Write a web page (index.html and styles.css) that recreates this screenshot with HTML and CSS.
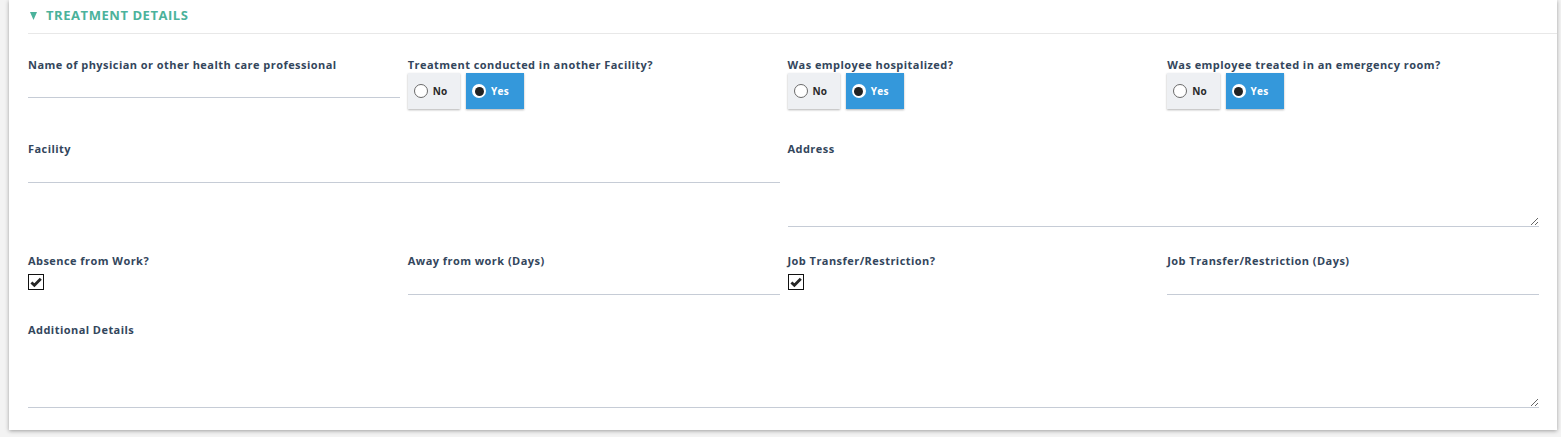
FILE: index.html
```html
<!DOCTYPE html>
<html>
<head>
<meta charset="utf-8">
<link rel="stylesheet" href="styles.css">
</head>
<body>
<div class="card">
  <div class="section-head">
    <svg class="caret" width="7" height="8" viewBox="0 0 7 8"><polygon points="0,0 7,0 3.5,8" fill="#4bb29b"/></svg>
    <span>TREATMENT DETAILS</span>
  </div>

  <div class="row row1">
    <div class="field">
      <label class="lbl">Name of physician or other health care professional</label>
      <input class="inp" type="text">
    </div>
    <div class="field">
      <label class="lbl">Treatment conducted in another Facility?</label>
      <div class="toggle">
        <span class="opt no"><span class="dot"></span>No</span>
        <span class="opt yes"><span class="dot on"></span>Yes</span>
      </div>
    </div>
    <div class="field">
      <label class="lbl">Was employee hospitalized?</label>
      <div class="toggle">
        <span class="opt no"><span class="dot"></span>No</span>
        <span class="opt yes"><span class="dot on"></span>Yes</span>
      </div>
    </div>
    <div class="field">
      <label class="lbl">Was employee treated in an emergency room?</label>
      <div class="toggle">
        <span class="opt no"><span class="dot"></span>No</span>
        <span class="opt yes"><span class="dot on"></span>Yes</span>
      </div>
    </div>
  </div>

  <div class="row row2">
    <div class="field span2">
      <label class="lbl">Facility</label>
      <input class="inp" type="text">
    </div>
    <div class="field span2">
      <label class="lbl">Address</label>
      <textarea class="ta"></textarea>
    </div>
  </div>

  <div class="row row3">
    <div class="field">
      <label class="lbl">Absence from Work?</label>
      <span class="check"><svg width="14" height="14" viewBox="0 0 14 14"><path d="M2.4 7.4 L5.4 10.3 L11.8 3.8" fill="none" stroke="#262626" stroke-width="2.8"/></svg></span>
    </div>
    <div class="field">
      <label class="lbl">Away from work (Days)</label>
      <input class="inp" type="text">
    </div>
    <div class="field">
      <label class="lbl">Job Transfer/Restriction?</label>
      <span class="check"><svg width="14" height="14" viewBox="0 0 14 14"><path d="M2.4 7.4 L5.4 10.3 L11.8 3.8" fill="none" stroke="#262626" stroke-width="2.8"/></svg></span>
    </div>
    <div class="field">
      <label class="lbl">Job Transfer/Restriction (Days)</label>
      <input class="inp" type="text">
    </div>
  </div>

  <div class="row row4">
    <div class="field span4">
      <label class="lbl">Additional Details</label>
      <textarea class="ta"></textarea>
    </div>
  </div>
</div>
</body>
</html>
```

FILE: styles.css
```css
html, body {
  margin: 0;
  padding: 0;
}
body {
  background: #f3f3f3;
  font-family: "Open Sans", "Liberation Sans", sans-serif;
  height: 437px;
  overflow: hidden;
}
.card {
  margin-left: 9px;
  width: 1548px;
  box-sizing: border-box;
  background: #fff;
  padding: 0 18px 22px 19px;
  box-shadow: 0 1px 4px rgba(0, 0, 0, 0.35);
}
.section-head {
  height: 33px;
  box-sizing: content-box;
  border-bottom: 1px solid #e8e8e8;
  margin-right: -18px;
  padding-left: 2px;
  display: flex;
  align-items: center;
  color: #4bb29b;
  font-weight: 700;
  font-size: 13px;
  letter-spacing: 0.55px;
}
.section-head span {
  line-height: 30px;
  padding-bottom: 3px;
}
.caret {
  margin-right: 9px;
  margin-top: -1px;
}
.row {
  display: grid;
  grid-template-columns: repeat(4, 1fr);
  column-gap: 8px;
}
.row1 { margin-top: 23px; }
.row2 { margin-top: 32px; }
.row3 { margin-top: 26px; }
.row4 { margin-top: 27px; }
.field {
  display: flex;
  flex-direction: column;
  align-items: flex-start;
}
.span2 { grid-column: span 2; }
.span4 { grid-column: span 4; }
.lbl {
  font-size: 11px;
  line-height: 15px;
  margin-bottom: 1px;
  font-weight: 700;
  letter-spacing: 0.45px;
  color: #33465c;
  white-space: nowrap;
}
.inp {
  width: 100%;
  box-sizing: border-box;
  height: 25px;
  border: 0;
  border-bottom: 1px solid #c6ccd6;
  outline: none;
  padding: 0;
  background: transparent;
}
.row2 .inp,
.row3 .inp {
  height: 26px;
}
.ta {
  width: 100%;
  box-sizing: border-box;
  height: 70px;
  border: 0;
  border-bottom: 1px solid #c6ccd6;
  outline: none;
  padding: 0;
  margin: 0;
  resize: vertical;
  display: block;
  background: transparent;
}
.toggle {
  display: flex;
  gap: 6px;
}
.opt {
  height: 36px;
  display: flex;
  align-items: center;
  box-sizing: border-box;
  padding: 0 13px 0 6px;
  font-size: 10px;
  font-weight: 700;
  box-shadow: 0 1px 2px rgba(0, 0, 0, 0.3);
}
.opt.no {
  background: #eef0f3;
  color: #2a2a2a;
}
.opt.yes {
  background: #3498db;
  color: #fff;
  padding-right: 15px;
  letter-spacing: 0.3px;
}
.dot {
  width: 14px;
  height: 14px;
  box-sizing: border-box;
  border-radius: 50%;
  border: 1px solid #6a6a6a;
  background: #fff;
  margin-right: 5px;
  display: flex;
  align-items: center;
  justify-content: center;
}
.dot.on {
  border: 0;
}
.dot.on::after {
  content: "";
  width: 9px;
  height: 9px;
  border-radius: 50%;
  background: #222;
}
.check {
  margin-top: 5px;
  width: 16px;
  height: 16px;
  box-sizing: border-box;
  border: 1px solid #111;
  display: flex;
  align-items: center;
  justify-content: center;
  background: #fff;
}
```
